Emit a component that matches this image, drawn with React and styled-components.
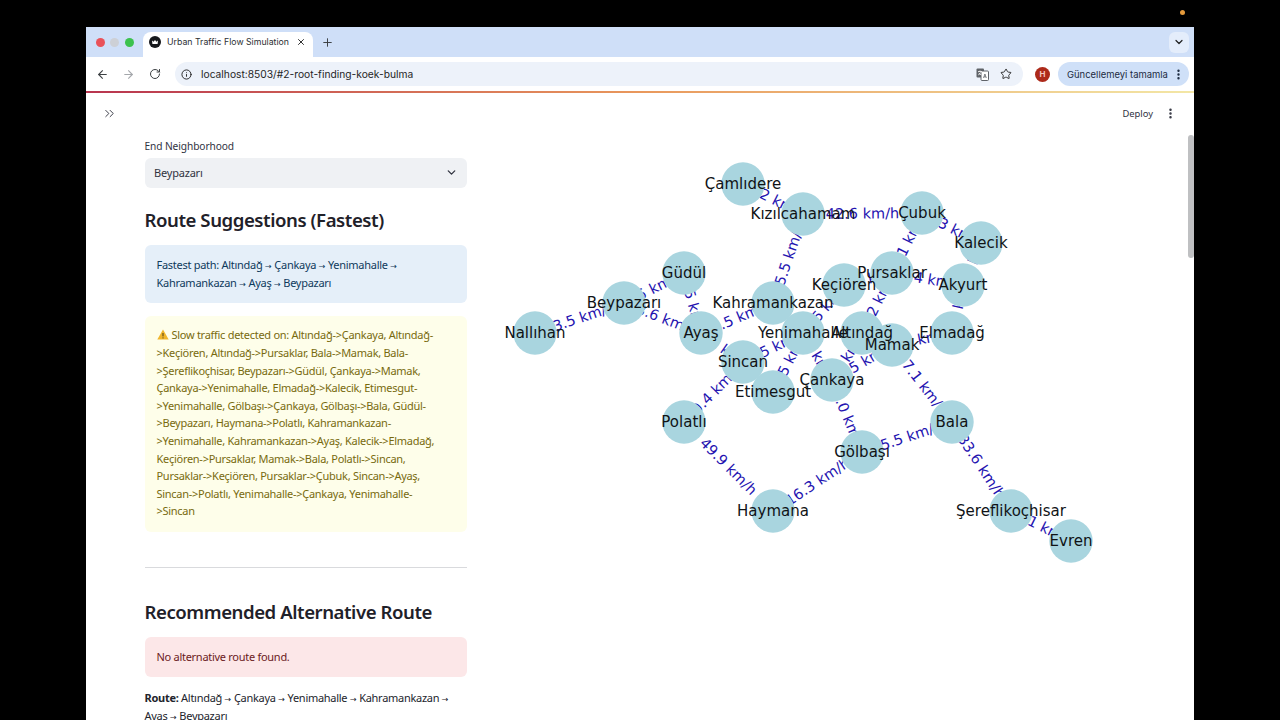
import React from "react";
import styled, { createGlobalStyle } from "styled-components";
import { ArrowLeft, ArrowRight, RotateCw, Info, Star, ChevronDown, Plus, X, EllipsisVertical, ChevronsRight } from "lucide-react";

const Global = createGlobalStyle`
  html, body { margin: 0; padding: 0; background: #000; height: 720px; overflow: hidden; }
  #root { height: 720px; }
  * { box-sizing: border-box; }
`;

const Screen = styled.div`
  position: relative;
  width: 1280px;
  height: 720px;
  padding: 27px 86px 0;
  overflow: hidden;
  font-family: "Noto Sans", "Liberation Sans", sans-serif;
`;
const RecordingDot = styled.span`
  position: absolute;
  left: 1180px;
  top: 10px;
  width: 5px;
  height: 5px;
  border-radius: 50%;
  background: #e59a3c;
`;
const Browser = styled.div`
  height: 693px;
  background: #fff;
  display: flex;
  flex-direction: column;
  overflow: hidden;
`;
const TabBar = styled.div`
  height: 30px;
  background: #cfdff8;
  display: flex;
  align-items: flex-end;
  padding: 0 5px 0 9.5px;
`;
const Lights = styled.div`
  display: flex;
  gap: 5.5px;
  align-self: center;
  margin-right: 9.5px;
`;
const Light = styled.span`
  width: 9px;
  height: 9px;
  border-radius: 50%;
  background: ${p => p.$c};
`;
const Tab = styled.div`
  width: 170px;
  height: 25px;
  background: #fff;
  border-radius: 8px 8px 0 0;
  display: flex;
  align-items: center;
  padding: 0 7px 5px 6px;
  gap: 6px;
  color: #2c2f33;
`;
const TabTitle = styled.span`
  flex: 1;
  font-size: 8.75px;
  font-family: "Inter", sans-serif;
  white-space: nowrap;
`;
const NewTab = styled.div`
  display: flex;
  align-self: center;
  margin-left: 7.5px;
  color: #3c4043;
  flex: 1;
`;
const TabMenu = styled.div`
  width: 20px;
  height: 21px;
  align-self: center;
  background: #e4edfb;
  border-radius: 6px;
  display: flex;
  align-items: center;
  justify-content: center;
  color: #1f1f1f;
`;
const Toolbar = styled.div`
  height: 34px;
  display: flex;
  align-items: center;
  padding: 0 5px 0 9px;
  background: #fff;
`;
const NavButton = styled.div`
  width: 14px;
  display: flex;
  justify-content: center;
  margin-right: ${p => p.$mr}px;
  color: ${p => p.$off ? "#a4a7ab" : "#3c4043"};
`;
const Omnibox = styled.div`
  flex: 1;
  height: 24px;
  border-radius: 12px;
  background: #edf2fa;
  display: flex;
  align-items: center;
  padding: 0 11px 0 5.5px;
  color: #1f1f1f;
`;
const Url = styled.span`
  flex: 1;
  margin-left: 9.5px;
  font-family: "Inter", sans-serif;
  font-size: 10.25px;
  white-space: nowrap;
`;
const OmniIcons = styled.div`
  display: flex;
  align-items: center;
  gap: 11.5px;
`;
const Avatar = styled.div`
  width: 15px;
  height: 15px;
  margin: 0 8px 0 12px;
  border-radius: 50%;
  background: #ad2a1a;
  color: #f4c7bd;
  font-size: 8px;
  font-weight: 700;
  display: flex;
  align-items: center;
  justify-content: center;
  font-family: "Inter", sans-serif;
`;
const UpdatePill = styled.div`
  width: 131px;
  height: 24px;
  border-radius: 12px;
  background: #cfe0f8;
  display: flex;
  align-items: center;
  justify-content: space-between;
  padding: 0 4px 0 9px;
  font-family: "Inter", sans-serif;
  font-size: 9.45px;
  color: #1c2b41;
  white-space: nowrap;
`;
const Rainbow = styled.div`
  height: 2px;
  flex: none;
  background: linear-gradient(90deg, #b8344f 0%, #e9985c 50%, #f3e7a6 100%);
`;
const App_ = styled.div`
  position: relative;
  flex: 1;
  display: flex;
  flex-direction: column;
  min-height: 0;
  overflow: hidden;
`;
const AppHeader = styled.div`
  height: 41px;
  flex: none;
  display: flex;
  align-items: center;
  padding: 0 17px 0 16px;
  color: #31333f;
`;
const DeployText = styled.span`
  margin-left: auto;
  margin-right: 11px;
  font-size: 9.4px;
  color: #31333f;
`;
const Scrollbar = styled.span`
  position: absolute;
  right: 0;
  top: 42px;
  width: 6px;
  height: 123px;
  border-radius: 3px;
  background: #bfc0c2;
`;
const Columns = styled.div`
  display: flex;
  padding: 0 0 0 58.5px;
`;
const LeftColumn = styled.div`
  width: 322px;
  flex: none;
`;
const FieldLabel = styled.div`
  font-size: 10.2px;
  line-height: 14px;
  color: #31333f;
  margin-top: 5px;
  letter-spacing: -0.1px;
`;
const Select = styled.div`
  height: 30px;
  margin-top: 5px;
  background: #eff1f4;
  border-radius: 6px;
  display: flex;
  align-items: center;
  justify-content: space-between;
  padding: 0 9px 1px 9.5px;
  font-size: 11px;
  color: #31333f;
  letter-spacing: -0.2px;
`;
const Heading = styled.h2`
  margin: ${p => p.$mt}px 0 0;
  font-size: 18.6px;
  line-height: 26px;
  font-weight: 600;
  color: #1f2129;
  letter-spacing: -0.45px;
  white-space: nowrap;
`;
const Alert = styled.div`
  margin-top: ${p => p.$mt}px;
  padding: ${p => p.$pt}px 12px ${p => p.$pb}px;
  border-radius: 6px;
  background: ${p => p.$bg};
  color: ${p => p.$fg};
  font-size: 11px;
  line-height: 17.6px;
  letter-spacing: -0.28px;
  white-space: nowrap;
`;
const Arrow = styled.span`
  font-size: 8px;
  line-height: 0;
  font-family: "DejaVu Sans", sans-serif;
  letter-spacing: 0;
`;
const Divider = styled.hr`
  margin: 35px 0 0;
  border: 0;
  border-top: 1px solid #d9dadd;
`;
const RouteText = styled.p`
  margin: 12px 0 0;
  font-size: 11px;
  line-height: 18px;
  color: #22242c;
  letter-spacing: -0.28px;
  white-space: nowrap;
`;
const Graph = styled.svg`
  flex: none;
  width: 680px;
  height: 440px;
  margin-left: 23.5px;
  display: block;
`;
const NodeCircle = styled.circle`
  fill: #a9d5df;
`;
const NodeName = styled.text`
  font-family: "DejaVu Sans", sans-serif;
  font-size: 15px;
  fill: #101316;
  text-anchor: middle;
  dominant-baseline: central;
`;
const EdgeLabel = styled.text`
  font-family: "DejaVu Sans", sans-serif;
  font-size: 14.5px;
  fill: #2413b0;
  text-anchor: middle;
  dominant-baseline: central;
`;

const nodes = {
  "Çamlıdere": [743, 184], "Kızılcahamam": [803, 214], "Çubuk": [922, 213], "Kalecik": [981, 243],
  "Güdül": [684, 273], "Pursaklar": [892, 273], "Keçiören": [844, 285], "Akyurt": [963, 285],
  "Beypazarı": [624, 303], "Kahramankazan": [773, 303], "Nallıhan": [535, 333], "Ayaş": [701, 333],
  "Yenimahalle": [803, 333], "Altındağ": [862, 333], "Elmadağ": [952, 333], "Mamak": [892, 345],
  "Sincan": [743, 362], "Etimesgut": [773, 392], "Çankaya": [832, 380], "Polatlı": [684, 422],
  "Bala": [952, 422], "Gölbaşı": [862, 452], "Haymana": [773, 511], "Şereflikoçhisar": [1011, 511],
  "Evren": [1071, 541],
};
const edges = [
  ["Nallıhan", "Beypazarı", "23.5 km/h"], ["Beypazarı", "Güdül", "6.5 km/h"], ["Beypazarı", "Ayaş", "38.6 km/h"],
  ["Güdül", "Ayaş", "35.5 km/h"], ["Ayaş", "Kahramankazan", "41.5 km/h"], ["Ayaş", "Sincan", "27.1 km/h"],
  ["Sincan", "Polatlı", "30.4 km/h"], ["Yenimahalle", "Sincan", "25.5 km/h"], ["Yenimahalle", "Etimesgut", "40.5 km/h"],
  ["Yenimahalle", "Çankaya", "8.2 km/h"], ["Altındağ", "Çankaya", "9.4 km/h"], ["Mamak", "Çankaya", "33.5 km/h"],
  ["Çankaya", "Gölbaşı", "28.0 km/h"], ["Mamak", "Bala", "37.1 km/h"], ["Gölbaşı", "Bala", "35.5 km/h"],
  ["Kızılcahamam", "Kahramankazan", "45.5 km/h"], ["Çamlıdere", "Kızılcahamam", "31.2 km/h"],
  ["Kızılcahamam", "Çubuk", "42.6 km/h"], ["Çubuk", "Pursaklar", "21.1 km/h"], ["Çubuk", "Kalecik", "44.3 km/h"],
  ["Pursaklar", "Akyurt", "36.4 km/h"], ["Kalecik", "Akyurt", "39.7 km/h"], ["Akyurt", "Elmadağ", "47.5 km/h"],
  ["Elmadağ", "Mamak", "6.8 km/h"], ["Pursaklar", "Altındağ", "29.2 km/h"], ["Keçiören", "Pursaklar", "26.1 km/h"],
  ["Keçiören", "Yenimahalle", "34.5 km/h"], ["Polatlı", "Haymana", "49.9 km/h"], ["Haymana", "Gölbaşı", "16.3 km/h"],
  ["Bala", "Şereflikoçhisar", "33.6 km/h"], ["Şereflikoçhisar", "Evren", "28.1 km/h"],
];

const edgeTransform = (a, b) => {
  const [x1, y1] = nodes[a];
  const [x2, y2] = nodes[b];
  let deg = (Math.atan2(y2 - y1, x2 - x1) * 180) / Math.PI;
  if (deg > 90) deg -= 180;
  if (deg < -90) deg += 180;
  const mx = (x1 + x2) / 2;
  const my = (y1 + y2) / 2;
  return { x: mx, y: my, transform: `rotate(${deg} ${mx} ${my})` };
};

const TrafficGraph = () => (
  <Graph viewBox="490 134 680 440">
    {edges.map(([a, b, t]) => (
      <EdgeLabel key={a + b} {...edgeTransform(a, b)}>{t}</EdgeLabel>
    ))}
    {Object.entries(nodes).map(([n, [x, y]]) => <NodeCircle key={n} cx={x} cy={y} r={21.7} />)}
    {Object.entries(nodes).map(([n, [x, y]]) => <NodeName key={n} x={x} y={y}>{n}</NodeName>)}
  </Graph>
);

const Favicon = () => (
  <svg width="12" height="12" viewBox="0 0 12 12">
    <circle cx="6" cy="6" r="6" fill="#16181c" />
    <path d="M3 4.5 L4.6 5.8 L6 4 L7.4 5.8 L9 4.5 L8.6 8 H3.4 Z" fill="#fff" />
  </svg>
);
const TranslateIcon = () => (
  <svg width="13" height="13" viewBox="0 0 13 13">
    <rect x="0.5" y="0.5" width="7.5" height="9" rx="1" fill="#5f6368" />
    <rect x="5" y="3" width="7.5" height="9.5" rx="1" fill="#fff" stroke="#5f6368" />
    <path d="M2 3.5h4M4 2.5v1M5.2 3.5c-.4 1.6-1.6 2.8-3 3.4M2.8 4.8c.5 1 1.4 1.7 2.4 2" stroke="#fff" strokeWidth=".8" fill="none" />
    <path d="M7.5 10l1.4-4 1.4 4M8 8.8h1.8" stroke="#5f6368" strokeWidth=".8" fill="none" />
  </svg>
);
const WarnIcon = () => (
  <svg width="12" height="11" viewBox="0 0 12 11" style={{ verticalAlign: "-1px", marginRight: 3 }}>
    <path d="M6 .5 L11.7 10.5 H.3 Z" fill="#f0b62c" />
    <path d="M6 4v3.4M6 8.4v1" stroke="#4a3a10" strokeWidth="1" />
  </svg>
);
const A = () => <Arrow>→</Arrow>;

export default function App() {
  return (
    <Screen>
      <Global />
      <RecordingDot />
      <Browser>
        <TabBar>
          <Lights>
            <Light $c="#e9525a" />
            <Light $c="#cdd0d6" />
            <Light $c="#3cc24e" />
          </Lights>
          <Tab>
            <Favicon />
            <TabTitle>Urban Traffic Flow Simulation</TabTitle>
            <X size={10} strokeWidth={2.2} color="#1f1f1f" />
          </Tab>
          <NewTab><Plus size={13} strokeWidth={1.8} /></NewTab>
          <TabMenu><ChevronDown size={12} strokeWidth={2.4} /></TabMenu>
        </TabBar>
        <Toolbar>
          <NavButton $mr={12}><ArrowLeft size={13} strokeWidth={2} /></NavButton>
          <NavButton $mr={13} $off><ArrowRight size={13} strokeWidth={2} /></NavButton>
          <NavButton $mr={13}><RotateCw size={12} strokeWidth={2} /></NavButton>
          <Omnibox>
            <Info size={11} strokeWidth={2} />
            <Url>localhost:8503/#2-root-finding-koek-bulma</Url>
            <OmniIcons>
              <TranslateIcon />
              <Star size={12} strokeWidth={1.8} />
            </OmniIcons>
          </Omnibox>
          <Avatar>H</Avatar>
          <UpdatePill>
            Güncellemeyi tamamla
            <EllipsisVertical size={13} strokeWidth={2.4} />
          </UpdatePill>
        </Toolbar>
        <Rainbow />
        <App_>
          <AppHeader>
            <ChevronsRight size={15} strokeWidth={1.5} />
            <DeployText>Deploy</DeployText>
            <EllipsisVertical size={13} strokeWidth={2.6} />
          </AppHeader>
          <Scrollbar />
          <Columns>
            <LeftColumn>
              <FieldLabel>End Neighborhood</FieldLabel>
              <Select>
                Beypazarı
                <ChevronDown size={13} strokeWidth={2.4} />
              </Select>
              <Heading $mt={19}>Route Suggestions (Fastest)</Heading>
              <Alert $mt={12} $pt={11} $pb={11.8} $bg="#e5eff9" $fg="#0f3a5c">
                Fastest path: Altındağ <A /> Çankaya <A /> Yenimahalle <A /><br />
                Kahramankazan <A /> Ayaş <A /> Beypazarı
              </Alert>
              <Alert $mt={13} $pt={10.5} $pb={11.9} $bg="#fefeea" $fg="#786a0e">
                <WarnIcon />Slow traffic detected on: Altındağ-&gt;Çankaya, Altındağ-<br />
                &gt;Keçiören, Altındağ-&gt;Pursaklar, Bala-&gt;Mamak, Bala-<br />
                &gt;Şereflikoçhisar, Beypazarı-&gt;Güdül, Çankaya-&gt;Mamak,<br />
                Çankaya-&gt;Yenimahalle, Elmadağ-&gt;Kalecik, Etimesgut-<br />
                &gt;Yenimahalle, Gölbaşı-&gt;Çankaya, Gölbaşı-&gt;Bala, Güdül-<br />
                &gt;Beypazarı, Haymana-&gt;Polatlı, Kahramankazan-<br />
                &gt;Yenimahalle, Kahramankazan-&gt;Ayaş, Kalecik-&gt;Elmadağ,<br />
                Keçiören-&gt;Pursaklar, Mamak-&gt;Bala, Polatlı-&gt;Sincan,<br />
                Pursaklar-&gt;Keçiören, Pursaklar-&gt;Çubuk, Sincan-&gt;Ayaş,<br />
                Sincan-&gt;Polatlı, Yenimahalle-&gt;Çankaya, Yenimahalle-<br />
                &gt;Sincan
              </Alert>
              <Divider />
              <Heading $mt={31}>Recommended Alternative Route</Heading>
              <Alert $mt={12} $pt={11} $pb={11.4} $bg="#fce7e8" $fg="#6b1a22">No alternative route found.</Alert>
              <RouteText>
                <b>Route:</b> Altındağ <A /> Çankaya <A /> Yenimahalle <A /> Kahramankazan <A /><br />
                Ayaş <A /> Beypazarı
              </RouteText>
            </LeftColumn>
            <TrafficGraph />
          </Columns>
        </App_>
      </Browser>
    </Screen>
  );
}
